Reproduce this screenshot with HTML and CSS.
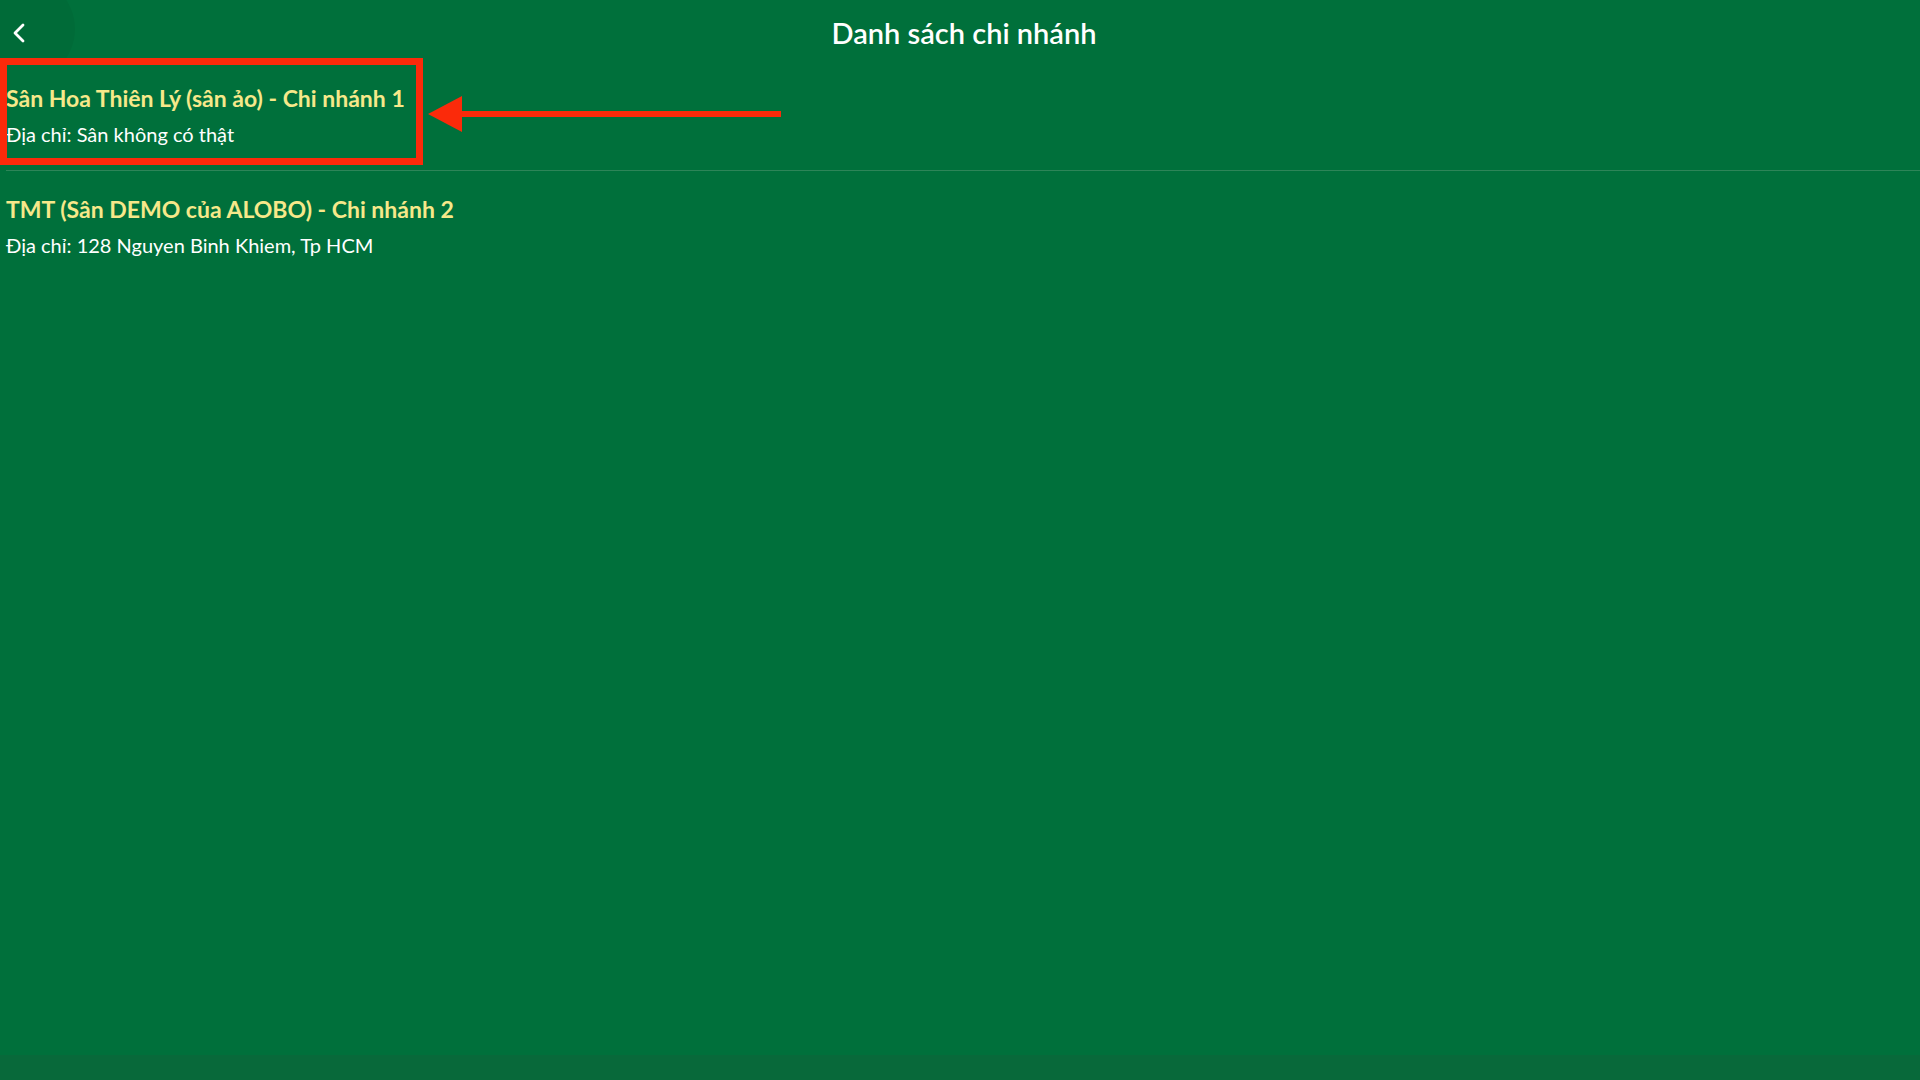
FILE: index.html
```html
<!DOCTYPE html>
<html lang="vi">
<head>
  <meta charset="UTF-8">
  <meta name="viewport" content="width=device-width, initial-scale=1.0">
  <title>Danh sách chi nhánh</title>
  <link rel="stylesheet" href="styles.css">
</head>
<body>
  <header class="topbar">
    <button class="back-btn" type="button" aria-label="Quay lại">
      <svg width="14" height="20" viewBox="0 0 14 20">
        <path d="M11 2 L3 10 L11 18" fill="none" stroke="#fff" stroke-width="2.8" stroke-linecap="round" stroke-linejoin="round"/>
      </svg>
    </button>
    <h1 class="topbar-title">Danh sách chi nhánh</h1>
    <span></span>
  </header>

  <main>
    <ul class="branch-list">
      <li class="branch-item">
        <p class="branch-name">Sân Hoa Thiên Lý (sân ảo) - Chi nhánh 1</p>
        <p class="branch-address">Địa chỉ: Sân không có thật</p>
        <!-- highlight frame + pointer -->
        <span class="mark-box"></span>
        <svg class="mark-arrow" width="370" height="50" viewBox="0 0 370 50">
          <polygon points="8,24 42,6 42,42" fill="#fb2a0a"/>
          <line x1="40" y1="24" x2="361" y2="24" stroke="#fb2a0a" stroke-width="6"/>
        </svg>
      </li>
      <li class="branch-item">
        <p class="branch-name">TMT (Sân DEMO của ALOBO) - Chi nhánh 2</p>
        <p class="branch-address">Địa chỉ: 128 Nguyen Binh Khiem, Tp HCM</p>
      </li>
    </ul>
  </main>
</body>
</html>
```

FILE: styles.css
```css
* {
  box-sizing: border-box;
}
html, body {
  height: 100%;
}
body {
  margin: 0;
  font-family: Lato, "Noto Sans", sans-serif;
  color: #fff;
  background: linear-gradient(to bottom, #00703b calc(100% - 25px), #08693a calc(100% - 25px));
}
.topbar {
  display: grid;
  grid-template-columns: 80px 1fr 80px;
  align-items: start;
  height: 58px;
  padding-top: 14px;
  overflow: hidden;
  position: relative;
}
.back-btn {
  position: relative;
  width: 40px;
  height: 36px;
  margin: 1px 0 0;
  padding: 0 0 0 12px;
  border: none;
  background: none;
  display: flex;
  align-items: center;
  cursor: pointer;
}
/* pressed ripple behind the back arrow */
.back-btn::before {
  content: "";
  position: absolute;
  left: -31px;
  top: -39px;
  width: 106px;
  height: 106px;
  border-radius: 50%;
  background: rgba(0, 0, 0, 0.045);
}
.back-btn svg {
  position: relative;
}
.topbar-title {
  margin: 0;
  text-align: center;
  font-size: 29px;
  line-height: 38px;
  font-weight: 600;
  padding-left: 8px;
}
.branch-list {
  list-style: none;
  margin: 0;
  padding: 0;
}
.branch-item {
  position: relative;
  margin-left: 6px;
  padding: 25px 0 21px;
  border-bottom: 1px solid #2d8558;
}
.branch-item:last-child {
  border-bottom: none;
}
.branch-item + .branch-item {
  padding-top: 23px;
}
.branch-name {
  margin: 0 0 6px;
  font-size: 23px;
  line-height: 30px;
  font-weight: 700;
  color: #f6e88a;
}
.branch-address {
  margin: 0;
  font-size: 20px;
  line-height: 30px;
}
.mark-box {
  position: absolute;
  left: -6px;
  top: 0;
  width: 423px;
  height: 107px;
  border: 7px solid #fb2a0a;
}
.mark-arrow {
  position: absolute;
  left: 414px;
  top: 32px;
}
```
